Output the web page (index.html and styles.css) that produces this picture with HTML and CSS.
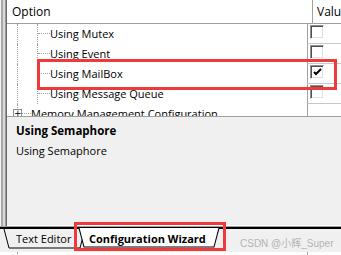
FILE: index.html
```html
<!DOCTYPE html>
<html lang="en">
<head>
    <meta charset="UTF-8">
    <title>Configuration Wizard</title>
    <link rel="stylesheet" href="styles.css">
</head>
<body>
    <div class="window">
        <div class="edge"></div>
        <div class="pane">
            <div class="tree">
                <div class="row head">
                    <div class="opt">Option</div>
                    <div class="val">Value</div>
                </div>
                <div class="row">
                    <div class="opt"><span class="guide"></span><span class="guide branch"></span><span class="label">Using Mutex</span></div>
                    <div class="val"><span class="check"></span></div>
                </div>
                <div class="row">
                    <div class="opt"><span class="guide"></span><span class="guide branch"></span><span class="label">Using Event</span></div>
                    <div class="val"><span class="check"></span></div>
                </div>
                <div class="row">
                    <div class="opt"><span class="guide"></span><span class="guide branch"></span><span class="label">Using MailBox</span></div>
                    <div class="val"><span class="check on"><svg width="9" height="8" viewBox="0 0 9 8"><polyline points="1,4 3,6 8,1" fill="none" stroke="#000" stroke-width="2"/></svg></span></div>
                </div>
                <div class="row">
                    <div class="opt"><span class="guide"></span><span class="guide branch"></span><span class="label">Using Message Queue</span></div>
                    <div class="val"><span class="check"></span></div>
                </div>
                <div class="row">
                    <div class="opt"><span class="guide node"><span class="plus">+</span></span><span class="label">Memory Management Configuration</span></div>
                    <div class="val"></div>
                </div>
            </div>
            <div class="desc">
                <b>Using Semaphore</b>
                <p>Using Semaphore</p>
            </div>
        </div>
    </div>

    <div class="tabs">
        <div class="tab">
            <svg class="tab-shape" viewBox="0 0 81 19" preserveAspectRatio="none"><polyline points="0,0 5,19 76,19 81,0" fill="#f0f0f0" stroke="#000" stroke-width="1"/></svg>
            <span>Text Editor</span>
        </div>
        <div class="tab active">
            <svg class="tab-shape" viewBox="0 0 140 19" preserveAspectRatio="none"><polyline points="0,0 5,18 135,18 140,0" fill="#fff" stroke="#000" stroke-width="1"/></svg>
            <span>Configuration Wizard</span>
        </div>
        <div class="watermark">CSDN @小辉_Super</div>
    </div>

    <div class="below">
        <div class="opt"><span class="guide node"><span class="plus">+</span></span><span class="label">Console Configuration</span></div>
        <div class="val"></div>
    </div>

    <div class="mark mark-row"></div>
    <div class="mark mark-tab"></div>
</body>
</html>
```

FILE: styles.css
```css
body {
    margin: 0;
    width: 341px;
    height: 255px;
    overflow: hidden;
    position: relative;
    font-family: 'Open Sans', 'Noto Sans CJK SC', sans-serif;
    font-size: 11px;
    color: #000;
    background: #f0f0f0;
}
.window {
    display: flex;
    height: 226px;
}
.edge {
    width: 7px;
    flex: none;
    background: linear-gradient(to right, #f4f4f4 0 1px, #a8a8a8 1px 3px, #d8d8d8 3px 5px, #9a9a9a 5px 6px, #696969 6px 7px);
}
.pane {
    flex: 1;
    display: flex;
    flex-direction: column;
}
.tree {
    height: 116px;
    overflow: hidden;
    background: #fff;
    border-bottom: 1px solid #a0a0a0;
}
.row {
    display: flex;
    height: 20px;
}
.row .opt, .below .opt {
    width: 300px;
    display: flex;
    align-items: center;
    white-space: nowrap;
}
.row .label {
    margin-bottom: 2px;
}
.row .val, .below .val {
    flex: 1;
    border-left: 1px solid #a0a0a0;
    border-bottom: 1px solid #c8c8c8;
    display: flex;
    align-items: flex-start;
    white-space: nowrap;
}
.row.head {
    height: 23px;
    border-bottom: 1px solid #a0a0a0;
}
.row.head .opt {
    padding-left: 5px;
    font-size: 12px;
}
.row.head .val {
    border-bottom: none;
    align-items: center;
    padding-left: 4px;
    font-size: 12px;
}
.guide {
    width: 20px;
    height: 100%;
    position: relative;
    flex: none;
}
.guide::before {
    content: '';
    position: absolute;
    left: 10px;
    top: 0;
    bottom: 0;
    border-left: 1px dotted #a0a0a0;
}
.guide.branch::after {
    content: '';
    position: absolute;
    left: 11px;
    width: 12px;
    top: 9px;
    border-top: 1px dotted #a0a0a0;
}
.guide.branch + .label {
    margin-left: 3px;
}
.guide.node::after {
    content: '';
    position: absolute;
    left: 15px;
    width: 9px;
    top: 9px;
    border-top: 1px dotted #a0a0a0;
}
.plus {
    position: absolute;
    left: 6px;
    top: 5px;
    width: 7px;
    height: 7px;
    border: 1px solid #909090;
    background: #fff;
    font-family: 'DejaVu Sans', sans-serif;
    font-size: 9px;
    line-height: 7px;
    text-align: center;
    z-index: 1;
}
.guide.node + .label {
    margin-left: 4px;
}
.check {
    width: 12px;
    height: 12px;
    margin: 1px 0 0 2px;
    border: 1px solid;
    border-color: #909090 #fff #fff #909090;
    box-shadow: inset 1px 1px #505050, inset -1px -1px #e0e0e0;
    background: #fff;
    display: flex;
    align-items: center;
    justify-content: center;
}
.desc {
    flex: 1;
    padding: 6px 9px;
    border-bottom: 1px solid #fff;
}
.desc b {
    display: block;
    line-height: 16px;
    font-size: 11.5px;
}
.desc p {
    margin: 4px 0 0;
    line-height: 16px;
}
.tabs {
    height: 23px;
    display: flex;
    align-items: flex-start;
    border-top: 1px solid #a0a0a0;
    box-shadow: inset 0 2px #000;
    padding-top: 2px;
    padding-left: 4px;
}
.tab {
    position: relative;
    height: 19px;
    width: 81px;
    display: flex;
    align-items: center;
    flex: none;
    white-space: nowrap;
}
.tab span {
    position: relative;
    padding-left: 12px;
}
.tab.active {
    width: 140px;
    margin-left: -6px;
    margin-top: -1px;
    height: 20px;
    font-weight: bold;
}
.tab.active span {
    padding-left: 10px;
}
.tab-shape {
    position: absolute;
    left: 0;
    top: 0;
    width: 100%;
    height: 100%;
    overflow: visible;
}
.watermark {
    flex: none;
    white-space: nowrap;
    margin: 6px 0 0 21px;
    font-family: 'Liberation Sans', 'Noto Sans CJK SC', sans-serif;
    font-size: 10px;
    color: #b4b4b4;
}
.below {
    display: flex;
    height: 6px;
    overflow: hidden;
    background: #fff;
    padding-left: 7px;
}
.below .opt {
    height: 20px;
}
.below .val {
    border-bottom: none;
}
.below .label {
    margin-top: 12px;
}
.mark {
    position: absolute;
    border: 3px solid #ee3a3a;
}
.mark-row {
    left: 37px;
    top: 59px;
    width: 294px;
    height: 25px;
}
.mark-tab {
    left: 74px;
    top: 222px;
    width: 146px;
    height: 23px;
}
```
